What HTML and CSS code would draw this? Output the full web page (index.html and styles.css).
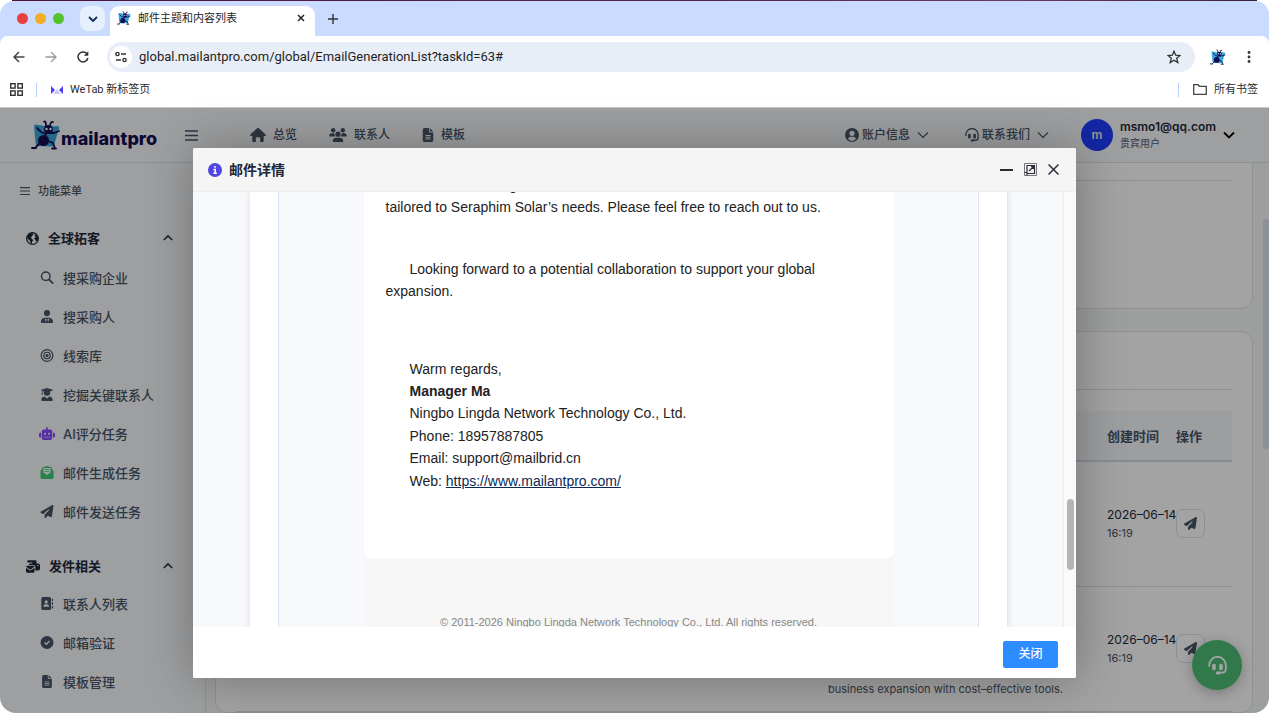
FILE: index.html
```html
<!DOCTYPE html>
<html lang="zh-CN">
<head>
<meta charset="utf-8">
<title>邮件主题和内容列表</title>
<meta name="viewport" content="width=device-width, initial-scale=1">
<link rel="stylesheet" href="styles.css">
</head>
<body>
<svg class="sprite" aria-hidden="true">
  <symbol id="ant" viewBox="0 0 30 30">
    <path d="M3 6Q3 4 5 4.500Q15 7 26 6Q29 6 28 9L23 25Q22 27 20 26.500L7 26Q5 26 4.500 23Z" fill="#3aa5e0"/>
    <circle cx="17.500" cy="9.500" r="4.500" fill="#150f52"/><ellipse cx="12.500" cy="20.500" rx="5.500" ry="5.500" fill="#150f52"/>
    <path d="M16 12L13.500 18M15 5.500Q15 1 13 1.500M19 5.500Q20 1 22 2M15 14L10 12L6 8M18 13L23 13L28 11M9 23L5 27M17 21L22 23L23.500 27M1 28H5M21 28.500H25" fill="none" stroke="#150f52" stroke-width="1.800" stroke-linecap="round"/>
    <circle cx="15.500" cy="9" r="1.200" fill="#fff"/><circle cx="19.500" cy="9" r="1.200" fill="#fff"/>
  </symbol>
  <symbol id="bars" viewBox="0 0 16 16"><path d="M0 2.500H16M0 8H16M0 13.500H16" fill="none" stroke="currentColor" stroke-width="1.800"/></symbol>
  <symbol id="home" viewBox="0 0 18 16"><path d="M9 0Q9.500 0 10 .4L17.700 7.300Q18.400 8.800 17 9H15.500V14.500Q15.500 16 14 16H11.500V11.500Q11.500 10.500 10.500 10.500H7.500Q6.500 10.500 6.500 11.500V16H4Q2.500 16 2.500 14.500V9H1Q-.4 8.800 .3 7.300L8 .4Q8.500 0 9 0Z" fill="currentColor"/></symbol>
  <symbol id="users" viewBox="0 0 20 16"><g fill="currentColor"><circle cx="4.500" cy="2.500" r="2.500"/><circle cx="15.500" cy="2.500" r="2.500"/><circle cx="10" cy="7" r="3"/><path d="M0 9Q0 6 3 6H5.500Q6 7.500 6.200 8Q6.500 9 7 9.600H.6Q0 9.600 0 9ZM20 9Q20 6 17 6H14.500Q14 7.500 13.800 8Q13.500 9 13 9.600H19.400Q20 9.600 20 9ZM4 15Q4 11 8 11H12Q16 11 16 15Q16 16 15 16H5Q4 16 4 15Z"/></g></symbol>
  <symbol id="file" viewBox="0 0 12 16"><path fill-rule="evenodd" d="M2 0H7V4Q7 5 8 5H12V14Q12 16 10 16H2Q0 16 0 14V2Q0 0 2 0ZM8 0L12 4H8ZM3 8V9H9V8ZM3 10V11H9V10ZM3 12V13H9V12Z" fill="currentColor"/></symbol>
  <symbol id="user" viewBox="0 0 16 16"><path fill-rule="evenodd" d="M8 0A8 8 0 1 1 8 16A8 8 0 1 1 8 0ZM8 3A3 3 0 1 0 8 9A3 3 0 1 0 8 3ZM3.400 12.500Q8 17 12.600 12.500Q11.600 10 9.500 10H6.500Q4.400 10 3.400 12.500Z" fill="currentColor"/></symbol>
  <symbol id="headset" viewBox="0 0 16 16"><path d="M1 8.500V7.700A7 7 0 0 1 15 7.700V11Q15 14 12 14H9" fill="none" stroke="currentColor" stroke-width="1.500" stroke-linecap="round"/><path d="M5 6.500H5.500Q6.500 6.500 6.500 7.500V11Q6.500 12 5.500 12H5Q3.500 12 3.500 10.500V8Q3.500 6.500 5 6.500ZM11 6.500H10.500Q9.500 6.500 9.500 7.500V11Q9.500 12 10.500 12H11Q12.500 12 12.500 10.500V8Q12.500 6.500 11 6.500Z" fill="currentColor"/><rect x="6.500" y="13" width="4" height="2.500" rx="1.200" fill="currentColor"/></symbol>
  <symbol id="down" viewBox="0 0 12 12"><path d="M1 3.500L6 8.500L11 3.500" fill="none" stroke="currentColor" stroke-width="1.200"/></symbol>
  <symbol id="up" viewBox="0 0 12 12"><path d="M1 8.500L6 3.500L11 8.500" fill="none" stroke="currentColor" stroke-width="1.800"/></symbol>
  <symbol id="globe" viewBox="0 0 16 16"><circle cx="8" cy="8" r="7.200" fill="none" stroke="currentColor" stroke-width="1.600"/><path d="M1 6Q2 3 5 1.500L8 1L9 3L7 5.500L6 7L7.500 8.500L9 10L7.500 12L7 15Q5 14 5 11L2 8ZM11 2L14 5L15 8L14 11L12 11L11 9L10 8L12 6L10.500 4Z" fill="currentColor"/></symbol>
  <symbol id="search" viewBox="0 0 16 16"><circle cx="6.500" cy="6.500" r="5.300" fill="none" stroke="currentColor" stroke-width="1.800"/><path d="M10.500 10.500L15 15" stroke="currentColor" stroke-width="2.200" stroke-linecap="round"/></symbol>
  <symbol id="tie" viewBox="0 0 16 16"><path fill-rule="evenodd" d="M8 0A3.800 3.800 0 1 1 8 7.600A3.800 3.800 0 1 1 8 0ZM5 9.500H11Q15.500 10.500 15.500 15Q15.500 16 14.500 16H1.500Q.5 16 .5 15Q.5 10.500 5 9.500ZM5.200 10.500L6.600 15L7.500 11.500ZM10.800 10.500L9.400 15L8.500 11.500Z" fill="currentColor"/></symbol>
  <symbol id="target" viewBox="0 0 16 16"><g fill="none" stroke="currentColor" stroke-width="1.500"><circle cx="8" cy="8" r="7.200"/><circle cx="8" cy="8" r="4"/></g><circle cx="8" cy="8" r="2" fill="currentColor"/></symbol>
  <symbol id="graduate" viewBox="0 0 16 16"><path d="M1 2L8 0L15 2Q16 2.500 15 3L12 4V5.500A4 4 0 0 1 4 5.500V4L2.500 3.600V6L3.200 8H1L1.700 6V3.200Q.5 2.500 1 2ZM5 10.500L8 13L11 10.500Q15 11 15 15Q15 16 14 16H2Q1 16 1 15Q1 11 5 10.500Z" fill="currentColor"/></symbol>
  <symbol id="robot" viewBox="0 0 20 16"><path fill-rule="evenodd" d="M10 0Q11 0 11 1V3H14Q16.500 3 16.500 5.500V13.500Q16.500 16 14 16H6Q3.500 16 3.500 13.500V5.500Q3.500 3 6 3H9V1Q9 0 10 0ZM7.500 7A1.300 1.300 0 1 0 7.500 9.600A1.300 1.300 0 1 0 7.500 7ZM12.500 7A1.300 1.300 0 1 0 12.500 9.600A1.300 1.300 0 1 0 12.500 7ZM6 12V13H8V12ZM9 12V13H11V12ZM12 12V13H14V12ZM1.500 7H2.500V13H1.500Q0 13 0 11.500V8.500Q0 7 1.500 7ZM18.500 7H17.500V13H18.500Q20 13 20 11.500V8.500Q20 7 18.500 7Z" fill="currentColor"/></symbol>
  <symbol id="mail" viewBox="0 0 16 16"><path fill-rule="evenodd" d="M6.500 .5Q8 -.5 9.500 .5L10.500 1H12Q14 1 14 3V3.700L15 4.500Q16 5.300 16 6.500V14Q16 16 14 16H2Q0 16 0 14V6.500Q0 5.300 1 4.500L2 3.700V3Q2 1 4 1H5.500ZM3.500 2.500V8L7 10.600Q8 11.300 9 10.600L12.500 8V2.500ZM5 4H11V5H5ZM5 6.500H11V7.500H5Z" fill="currentColor"/></symbol>
  <symbol id="plane" viewBox="0 0 512 512"><path d="M498.1 5.600c10.100 7 15.400 19.100 13.500 31.200l-64 416c-1.500 9.700-7.400 18.200-16 23s-18.900 5.400-28 1.600L284 427.700l-68.500 74.100c-8.900 9.700-22.900 12.900-35.200 8.100S160 493.200 160 480V396.400c0-4 1.500-7.800 4.200-10.700L331.800 202.800c5.800-6.300 5.600-16-.4-22s-15.700-6.400-22-.7L106 360.800 17.700 316.600C7.100 311.300 .3 300.700 0 288.900s5.900-22.800 16.100-28.700l448-256c10.700-6.100 23.900-5.500 34 1.400z" fill="currentColor"/></symbol>
  <symbol id="bulk" viewBox="0 0 18 16"><path fill-rule="evenodd" d="M3 0H12Q13.500 0 13.500 1.500V4H16Q18 4 18 6V11Q18 13 16 13H12V8Q12 6 10 6H4Q3 4 5 4H8V3H3Q1.500 3 1.500 1.500Q1.500 0 3 0ZM14.500 6V7.500H16.200V6ZM1.500 7H9.500Q11 7 11 8L6.500 11.500Q5.500 12.200 4.500 11.500L0 8Q0 7 1.500 7ZM0 9.700L4 12.600Q5.500 13.500 7 12.600L11 9.700V14.500Q11 16 9.500 16H1.500Q0 16 0 14.500Z" fill="currentColor"/></symbol>
  <symbol id="book" viewBox="0 0 16 16"><path fill-rule="evenodd" d="M3 0H11Q13 0 13 2V14Q13 16 11 16H3Q1 16 1 14V2Q1 0 3 0ZM7 4A2 2 0 1 0 7 8A2 2 0 1 0 7 4ZM3.500 12H10.500Q10.500 9 8 9H6Q3.500 9 3.500 12ZM14 2H15.500V5H14ZM14 6.500H15.500V9.500H14ZM14 11H15.500V14H14Z" fill="currentColor"/></symbol>
  <symbol id="check" viewBox="0 0 16 16"><circle cx="8" cy="8" r="8" fill="currentColor"/><path d="M5 8L7.200 10.200L11.200 6" fill="none" stroke="#fff" stroke-width="1.500"/></symbol>
</svg>

<div class="desktop"></div>
<div class="window">
  <div class="tabs">
    <div class="lights"><i class="red"></i><i class="amber"></i><i class="green"></i></div>
    <button class="tab-menu" aria-label="搜索标签页"><svg width="12" height="12" viewBox="0 0 12 12"><path d="M2 4L6 8L10 4" fill="none" stroke="#14285a" stroke-width="1.800"/></svg></button>
    <div class="tab">
      <svg width="14" height="14"><use href="#ant"/></svg>
      <span class="tab-title">邮件主题和内容列表</span>
      <button class="plain" aria-label="关闭标签页"><svg width="8" height="8" viewBox="0 0 8 8"><path d="M1 1L7 7M7 1L1 7" stroke="#222" stroke-width="1.500"/></svg></button>
    </div>
    <button class="plain new-tab" aria-label="新标签页"><svg width="10" height="10" viewBox="0 0 10 10"><path d="M5 0V10M0 5H10" stroke="#333" stroke-width="1.400"/></svg></button>
  </div>
  <div class="toolbar">
    <button class="plain" aria-label="后退"><svg width="12" height="12" viewBox="0 0 12 12"><path d="M11.500 6H1M6 1L1 6L6 11" fill="none" stroke="#444" stroke-width="1.500"/></svg></button>
    <button class="plain" aria-label="前进"><svg width="12" height="12" viewBox="0 0 12 12"><path d="M.5 6H11M6 1L11 6L6 11" fill="none" stroke="#999" stroke-width="1.300"/></svg></button>
    <button class="plain" aria-label="刷新"><svg width="12" height="12" viewBox="0 0 12 12"><path d="M10.300 3.300A5 5 0 1 0 10.900 7" fill="none" stroke="#333" stroke-width="1.500"/><path d="M11.300 .3V4.800H6.800Z" fill="#333"/></svg></button>
    <div class="address">
      <span class="site"><svg width="12" height="12" viewBox="0 0 12 12"><g fill="none" stroke="#333" stroke-width="1.400"><circle cx="2.500" cy="3" r="1.600"/><circle cx="9.500" cy="9" r="1.600"/><path d="M6 3H11M1 9H6"/></g></svg></span>
      <input class="url" aria-label="地址" value="global.mailantpro.com/global/EmailGenerationList?taskId=63#">
      <button class="plain" aria-label="收藏"><svg width="14" height="14" viewBox="0 0 14 14"><path d="M7 1.200L8.700 5.200L13 5.500L9.700 8.300L10.800 12.600L7 10.300L3.200 12.600L4.300 8.300L1 5.500L5.300 5.200Z" fill="none" stroke="#333" stroke-width="1.300"/></svg></button>
    </div>
    <svg class="extension" width="16" height="16"><use href="#ant"/></svg>
    <button class="plain" aria-label="菜单"><svg width="4" height="12" viewBox="0 0 4 12"><g fill="#333"><circle cx="2" cy="1.500" r="1.400"/><circle cx="2" cy="6" r="1.400"/><circle cx="2" cy="10.500" r="1.400"/></g></svg></button>
  </div>
  <div class="bookmarks">
    <svg width="13" height="13" viewBox="0 0 13 13"><g fill="none" stroke="#333" stroke-width="1.400"><rect x=".7" y=".7" width="4.400" height="4.400"/><rect x="7.900" y=".7" width="4.400" height="4.400"/><rect x=".7" y="7.900" width="4.400" height="4.400"/><rect x="7.900" y="7.900" width="4.400" height="4.400"/></g></svg>
    <i class="split"></i>
    <a class="bookmark" href="#"><svg width="12" height="8" viewBox="0 0 12 8"><path d="M0 0L4 4L0 8ZM12 0L8 4L12 8Z" fill="#4a3df5"/><path d="M2 8L6 3L10 8Z" fill="#cfc9fb"/></svg>WeTab 新标签页</a>
    <i class="split last"></i>
    <a class="bookmark all" href="#"><svg width="14" height="11" viewBox="0 0 14 11"><path d="M.7 .7H5L6.500 2.300H13.300V10.300H.7Z" fill="none" stroke="#444" stroke-width="1.300"/></svg>所有书签</a>
  </div>

  <div class="app">
    <header class="header">
      <a class="logo" href="#"><svg width="30" height="30"><use href="#ant"/></svg><span>mailantpro</span></a>
      <button class="plain burger" aria-label="折叠菜单"><svg width="13" height="13"><use href="#bars"/></svg></button>
      <nav class="nav">
        <a href="#"><svg width="16" height="14"><use href="#home"/></svg>总览</a>
        <a href="#"><svg width="18" height="14"><use href="#users"/></svg>联系人</a>
        <a href="#"><svg width="12" height="14"><use href="#file"/></svg>模板</a>
      </nav>
      <div class="account">
        <a href="#"><svg width="14" height="14"><use href="#user"/></svg>账户信息<svg class="caret" width="12" height="12"><use href="#down"/></svg></a>
        <a href="#"><svg width="14" height="14"><use href="#headset"/></svg>联系我们<svg class="caret" width="12" height="12"><use href="#down"/></svg></a>
        <button class="plain profile">
          <span class="avatar">m</span>
          <span class="who"><b>msmo1@qq.com</b><small>贵宾用户</small></span>
          <svg width="12" height="12" viewBox="0 0 12 12"><path d="M1 3.500L6 8.500L11 3.500" fill="none" stroke="#000" stroke-width="1.800"/></svg>
        </button>
      </div>
    </header>

    <aside class="sidebar">
      <div class="side-title"><svg width="10" height="10"><use href="#bars"/></svg>功能菜单</div>
      <section class="group">
        <h2><svg width="13" height="13"><use href="#globe"/></svg>全球拓客<svg class="fold" width="10" height="10"><use href="#up"/></svg></h2>
        <ul>
          <li><a href="#"><svg width="13" height="13"><use href="#search"/></svg>搜采购企业</a></li>
          <li><a href="#"><svg width="13" height="13"><use href="#tie"/></svg>搜采购人</a></li>
          <li><a href="#"><svg width="13" height="13"><use href="#target"/></svg>线索库</a></li>
          <li><a href="#"><svg width="13" height="13"><use href="#graduate"/></svg>挖掘关键联系人</a></li>
          <li><a href="#"><svg class="purple" width="16" height="13"><use href="#robot"/></svg>AI评分任务</a></li>
          <li><a href="#"><svg class="mail-green" width="13" height="13"><use href="#mail"/></svg>邮件生成任务</a></li>
          <li><a href="#"><svg width="13" height="13"><use href="#plane"/></svg>邮件发送任务</a></li>
        </ul>
      </section>
      <section class="group">
        <h2><svg width="14" height="13"><use href="#bulk"/></svg>发件相关<svg class="fold" width="10" height="10"><use href="#up"/></svg></h2>
        <ul>
          <li><a href="#"><svg width="13" height="13"><use href="#book"/></svg>联系人列表</a></li>
          <li><a href="#"><svg width="13" height="13"><use href="#check"/></svg>邮箱验证</a></li>
          <li><a href="#"><svg width="13" height="13"><use href="#file"/></svg>模板管理</a></li>
        </ul>
      </section>
    </aside>

    <main class="main">
      <section class="card filter">
        <div class="filter-head"><svg width="13" height="13"><use href="#check"/></svg><span>重置</span></div>
      </section>
      <section class="card list">
        <div class="list-head"></div>
        <table>
          <colgroup><col><col class="c-content"><col class="c-date"><col class="c-action"></colgroup>
          <thead><tr><th></th><th></th><th>创建时间</th><th>操作</th></tr></thead>
          <tbody>
            <tr><td></td><td></td><td class="date">2026–06–14<small>16:19</small></td><td><button class="send" aria-label="发送"><svg width="13" height="13"><use href="#plane"/></svg></button></td></tr>
            <tr><td></td><td class="excerpt">business expansion with cost–effective tools.</td><td class="date">2026–06–14<small>16:19</small></td><td><button class="send" aria-label="发送"><svg width="13" height="13"><use href="#plane"/></svg></button></td></tr>
          </tbody>
        </table>
      </section>
      <div class="page-scroll"></div>
    </main>
    <button class="support" aria-label="在线客服"><svg width="19" height="19"><use href="#headset"/></svg></button>

    <div class="shade">
      <div class="modal" role="dialog" aria-labelledby="modal-title">
        <div class="modal-head">
          <svg width="14" height="14" viewBox="0 0 14 14"><circle cx="7" cy="7" r="7" fill="#4f46e5"/><path d="M7 3V4.800M5.500 6.500H7.200V10M5.300 10.300H8.900" fill="none" stroke="#fff" stroke-width="1.500"/></svg>
          <h1 id="modal-title">邮件详情</h1>
          <button class="plain" aria-label="最小化"><svg width="13" height="13" viewBox="0 0 13 13"><path d="M0 7H13" stroke="#2d2c3b" stroke-width="1.800"/></svg></button>
          <button class="plain" aria-label="最大化"><svg width="13" height="13" viewBox="0 0 13 13"><path d="M.5 .5H12.500V12.500H.5Z" fill="none" stroke="#777" stroke-width="1"/><path d="M3 2.500H10.500V10.500H3ZM5 8L9.500 3.500M7 3.500H9.500V6M.5 9.500H3V12.500" fill="none" stroke="#2d2c3b" stroke-width="1.200"/></svg></button>
          <button class="plain" aria-label="关闭"><svg width="11" height="11" viewBox="0 0 11 11"><path d="M.5 .5L10.500 10.500M10.500 .5L.5 10.500" stroke="#2d2c3b" stroke-width="1.500"/></svg></button>
        </div>
        <div class="modal-body">
          <div class="viewer">
            <div class="sheet">
              <div class="canvas">
                <article class="mail">
                  <div class="letter">
                    <p class="lead">automated marketing<br>tailored to Seraphim Solar’s needs. Please feel free to reach out to us.</p>
                    <p class="indent">Looking forward to a potential collaboration to support your global<br>expansion.</p>
                    <address class="signature">Warm regards,<br><b>Manager Ma</b><br>Ningbo Lingda Network Technology Co., Ltd.<br>Phone: 18957887805<br>Email: support@mailbrid.cn<br>Web: <a href="https://www.mailantpro.com/">https://www.mailantpro.com/</a></address>
                  </div>
                  <footer class="copyright">© 2011-2026 Ningbo Lingda Network Technology Co., Ltd. All rights reserved.</footer>
                </article>
              </div>
            </div>
          </div>
          <div class="modal-scroll"></div>
        </div>
        <div class="modal-foot"><button class="close">关闭</button></div>
      </div>
    </div>
  </div>
</div>
</body>
</html>
```
FILE: styles.css
```css
* { box-sizing: border-box; }
body {
  margin: 0;
  height: 100vh;
  display: flex;
  flex-direction: column;
  overflow: hidden;
  background: #fff;
  color: #475569;
  font: 13px/20px Inter, "Noto Sans CJK SC", sans-serif;
}
a { color: inherit; text-decoration: none; }
button, input { font: inherit; color: inherit; }
svg { display: block; flex: none; }
ul, h1, h2, p { margin: 0; padding: 0; list-style: none; }
.sprite { position: absolute; width: 0; height: 0; }
.plain { display: flex; align-items: center; padding: 0; border: 0; background: none; }

.desktop { height: 1px; flex: none; margin: 0 12px; background: linear-gradient(90deg, #4c1238, #5a2350 60%, #6b3b62 80%, #3c2038); }
.window {
  flex: 1;
  min-height: 0;
  display: flex;
  flex-direction: column;
  overflow: hidden;
  border-radius: 14px 14px 16px 16px;
  background: #c9dbfe;
}

/* Browser chrome */
.tabs { display: flex; align-items: center; height: 35px; flex: none; padding-left: 17px; }
.lights { display: flex; gap: 7px; margin-right: 16px; }
.lights i { width: 11px; height: 11px; border-radius: 50%; }
.red { background: #e8403c; }
.amber { background: #f3ad24; }
.green { background: #55c22f; }
.tab-menu { width: 25px; height: 25px; display: grid; place-items: center; padding: 0; border: 0; border-radius: 8px; background: #e6effd; }
.tab {
  align-self: flex-end;
  display: flex;
  align-items: center;
  gap: 7px;
  width: 205px;
  height: 30px;
  margin-left: 5px;
  padding: 0 10px 6px 7px;
  border-radius: 9px 9px 0 0;
  background: #fff;
}
.tab-title { flex: 1; color: #1f1f1f; font-size: 11px; }
.new-tab { margin-left: 13px; }
.toolbar { display: flex; align-items: center; height: 41px; flex: none; padding: 0 18px 0 13px; border-radius: 8px 8px 0 0; background: #fff; }
.toolbar > .plain { margin-right: 20px; }
.toolbar > .plain:last-child { margin-right: 0; }
.address { flex: 1; display: flex; align-items: center; height: 30px; margin-right: 15px; padding: 0 14px 0 3px; border-radius: 15px; background: #e8eef8; }
.toolbar > .address { margin-left: -2px; }
.site { width: 22px; height: 22px; display: grid; place-items: center; border-radius: 50%; background: #fff; }
.url { flex: 1; min-width: 0; padding: 0 0 0 7px; border: 0; outline: 0; background: none; color: #1f1f1f; font: 13px/20px Roboto, sans-serif; }
.extension { margin-right: 21px; }
.bookmarks { display: flex; align-items: center; height: 31px; flex: none; padding: 0 11px 5px 10px; border-bottom: 1px solid #c9c9c9; background: #fff; color: #2b2b2b; font: 11px/16px Roboto, "Noto Sans CJK SC", sans-serif; }
.split { width: 1px; height: 14px; margin: 0 14px 0 13px; background: #b8cffa; }
.split.last { margin-left: auto; }
.bookmark { display: flex; align-items: center; gap: 7px; }

/* Application */
.app { position: relative; flex: 1; min-height: 0; display: grid; grid-template: 55px minmax(0, 1fr) / 206px minmax(0, 1fr); background: #f5f9f8; }
.header { grid-column: 1 / -1; display: flex; align-items: center; padding: 0 34px 0 31px; border-bottom: 1px solid #dfe3e8; background: #f8f9fa; }
.logo { display: flex; align-items: center; color: #150f52; font: 800 18px/24px Inter, sans-serif; }
.logo span { margin-top: 7px; }
.burger { margin-left: 28px; }
.nav { display: flex; gap: 32px; margin-left: 52px; font-weight: 500; font-size: 12px; }
.nav a, .account a { display: flex; align-items: center; gap: 7px; }
.account { display: flex; align-items: center; margin-left: auto; gap: 36px; font-weight: 500; font-size: 12px; }
.account a { gap: 3px; }
.account .caret { margin-left: 4px; }
.profile { gap: 7px; text-align: left; margin-left: -4px; }
.avatar { width: 32px; height: 32px; display: grid; place-items: center; border-radius: 50%; background: #1f3dff; color: #e8e8e8; font-weight: 600; font-size: 12px; }
.who { display: flex; flex-direction: column; color: #1e293b; line-height: 17px; }
.who b { font-size: 12px; font-weight: 600; }
.who small { font-size: 10px; color: #64748b; }

.sidebar { border-right: 1px solid #dfe3e8; background: #f8f9fb; overflow: hidden; font-weight: 500; }
.side-title { display: flex; align-items: center; gap: 8px; height: 55px; padding-left: 20px; font-size: 11px; }
.group h2 { display: flex; align-items: center; gap: 9px; height: 40px; padding: 0 32px 0 26px; color: #1e293b; font-size: 13px; font-weight: 700; }
.group + .group { margin-top: 17px; }
.group + .group h2 { height: 36px; }
.fold { margin-left: auto; }
.group a { display: flex; align-items: center; gap: 8px; height: 39px; padding-left: 39px; }
.group a svg { width: 16px; }
.purple { color: #8848ff; }
.mail-green { color: #3ccb74; }

.main { position: relative; display: flex; flex-direction: column; gap: 22px; overflow: hidden; padding: 0 16px 0 9px; }
.card { flex: none; border: 1px solid #dde2e9; border-radius: 12px; background: #fff; padding: 0 20px; }
.filter { height: 166px; margin-top: -20px; }
.filter-head { display: flex; align-items: center; justify-content: flex-end; gap: 11px; height: 37px; padding: 0 22px 12px 0; border-bottom: 1px solid #d9dee6; }
.list-head { height: 58px; border-bottom: 1px solid #d9dee6; margin-bottom: 21px; }
table { width: 100%; border-collapse: collapse; table-layout: fixed; }
th, td { padding: 0; text-align: left; }
th { height: 50px; background: #f5f8fb; border-bottom: 2px solid #d5dce8; font-weight: 700; }
td { height: 125px; border-bottom: 1px solid #d9dee6; }
.c-content { width: 279px; }
.c-date { width: 69px; }
.c-action { width: 56px; }
.date { white-space: nowrap; color: #1e293b; font-size: 12px; line-height: 19px; }
.date small { display: block; color: #4b5563; font-size: 11px; }
.send { display: grid; place-items: center; width: 29px; height: 29px; padding: 0; border: 1px solid #dce1ea; border-radius: 7px; background: #fff; }
.excerpt { vertical-align: bottom; padding-bottom: 12px; color: #4b5563; font-size: 11px; }
.page-scroll { position: absolute; right: 0; top: 56px; width: 6px; height: 230px; border-radius: 3px; background: #dbe3f0; }
.support { position: absolute; right: 27px; bottom: 23px; width: 50px; height: 50px; display: grid; place-items: center; padding: 0; border: 0; border-radius: 50%; background: #4ebe75; color: #fff; box-shadow: 0 3px 14px #0004; }

/* Mail dialog */
.shade { position: absolute; inset: 0; display: flex; justify-content: center; padding: 40px 16px 35px; background: #0000005c; }
.modal { display: flex; flex-direction: column; width: 883px; max-width: 100%; border-radius: 2px; overflow: hidden; background: #fff; box-shadow: 1px 1px 50px #0000004d; }
.modal-head { display: flex; align-items: center; gap: 11px; height: 44px; flex: none; padding: 0 17px 0 15px; border-bottom: 1px solid #eee; background: #f5f5f5; }
.modal-head h1 { flex: 1; margin-left: -4px; color: #1e293b; font-size: 14px; font-weight: 700; }
.modal-body { flex: 1; min-height: 0; display: flex; overflow: hidden; }
.viewer { flex: 1; min-width: 0; padding: 0 54px 0 57px; border-right: 2px solid #f0f1f2; background: #f7f9fb; }
.sheet { padding: 0 28px; border-right: 1px solid #e2e7ee; background: #fff; box-shadow: 0 0 6px #64748b33; }
.canvas { display: flex; justify-content: center; border: solid #dbe3f0; border-width: 0 1px; background: #f7f9fc; }
.mail { width: 530px; background: #f7f7f7; color: #222; font: 14px/1.6 "Liberation Sans", Arial, sans-serif; }
.letter { margin-top: -18px; padding: 0 22px 66px; border-radius: 0 0 6px 6px; background: #fff; }
.indent { padding: 39px 0 55px; text-indent: 24px; }
.signature { padding-left: 24px; font-style: normal; }
.signature a { color: #0b2a55; text-decoration: underline; }
.copyright { padding: 56px 0; text-align: center; color: #888; font-size: 11px; line-height: 17px; }
.modal-scroll { width: 12px; flex: none; padding: 307px 2px 0 3px; background: #fafafa; }
.modal-scroll::before { content: ""; display: block; height: 71px; border-radius: 4px; background: #b5b5b5; }
.modal-foot { display: flex; align-items: center; justify-content: flex-end; height: 51px; flex: none; padding: 3px 18px 0; background: #fff; }
.close { width: 55px; height: 27px; padding: 0; border: 0; border-radius: 2px; background: #2d8cff; color: #fff; font-size: 12px; font-weight: 500; }
```
